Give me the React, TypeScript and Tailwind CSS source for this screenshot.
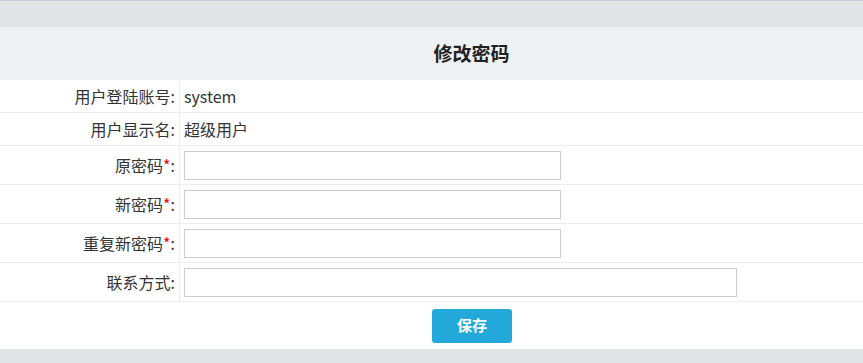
import React from "react";

const font = { fontFamily: '"Noto Sans CJK SC", "Noto Sans", sans-serif' };

type Row = { label: string; required?: boolean; value?: string; input?: "short" | "long" };

const rows: Row[] = [
  { label: "用户登陆账号", value: "system" },
  { label: "用户显示名", value: "超级用户" },
  { label: "原密码", required: true, input: "short" },
  { label: "新密码", required: true, input: "short" },
  { label: "重复新密码", required: true, input: "short" },
  { label: "联系方式", input: "long" },
];

function FormRow({ row }: { row: Row }) {
  return (
    <div className={`flex border-b border-[#ededed] ${row.input ? "h-[39px]" : "h-[33px]"}`}>
      <div className="w-[180px] shrink-0 border-r border-[#ededed] flex items-center justify-end pr-[4px] text-[16px] text-[#333]">
        {row.label}
        {row.required && <span className="text-[#ff0000]">*</span>}:
      </div>
      <div className="flex-1 flex items-center pl-[4px] text-[16px] text-[#333]">
        {row.input ? (
          <input
            type={row.input === "short" ? "password" : "text"}
            className={`h-[29px] border border-[#c9ccd1] bg-white outline-none px-1 ${
              row.input === "short" ? "w-[377px]" : "w-[553px]"
            }`}
          />
        ) : (
          <span>{row.value}</span>
        )}
      </div>
    </div>
  );
}

export default function App() {
  return (
    <div className="w-[863px] h-[363px] bg-white flex flex-col" style={font}>
      <div className="h-[27px] bg-[#e2e3e5] border-t border-[#c8ccd3]" />
      <div className="h-[53px] bg-[#eef2f5] flex items-center justify-center pl-[80px]">
        <h1 className="text-[19px] font-bold text-[#222]">修改密码</h1>
      </div>
      {rows.map((r) => (
        <FormRow key={r.label} row={r} />
      ))}
      <div className="h-[47px] flex items-center justify-center pl-[81px]">
        <button className="w-[80px] h-[34px] rounded-[3px] bg-[#23a9d9] text-white text-[15px] font-bold">
          保存
        </button>
      </div>
      <div className="flex-1 bg-[#e2e3e5]" />
    </div>
  );
}
